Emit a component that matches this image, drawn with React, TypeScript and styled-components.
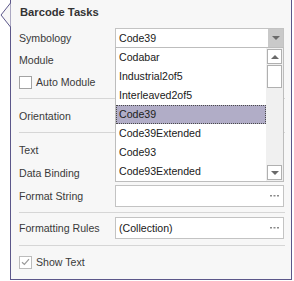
import React from "react";
import styled, { createGlobalStyle } from "styled-components";

const GlobalStyle = createGlobalStyle`
  body {
    margin: 0;
    background: #ffffff;
    font-family: "Liberation Sans", Arial, sans-serif;
  }
`;

const symbologies = [
  "Codabar",
  "Industrial2of5",
  "Interleaved2of5",
  "Code39",
  "Code39Extended",
  "Code93",
  "Code93Extended",
];

const Frame = styled.div`
  position: relative;
  width: 294px;
  height: 281px;
  padding-left: 10px;
  box-sizing: border-box;
`;

const Panel = styled.div`
  width: 282px;
  height: 280px;
  box-sizing: border-box;
  border: 1px solid #5c578a;
  border-top: none;
  background: #f7f7f7;
  padding: 0 6px 0 8px;
  display: flex;
  flex-direction: column;
  font-size: 10.6px;
  color: #3a3a3a;
`;

const Pointer = styled.svg`
  position: absolute;
  left: 0;
  top: 0;
`;

const Title = styled.div`
  height: 24px;
  line-height: 24px;
  margin-bottom: 4px;
  padding-left: 1px;
  font-weight: bold;
  font-size: 11.2px;
  color: #333333;
`;

const Row = styled.div<{ $h?: number; $mb?: number }>`
  height: ${(p) => p.$h ?? 22}px;
  margin-bottom: ${(p) => p.$mb ?? 0}px;
  display: flex;
  align-items: center;
  flex-shrink: 0;
`;

const Label = styled.div`
  width: 96px;
  flex-shrink: 0;
  white-space: nowrap;
`;

const Combo = styled.div`
  position: relative;
  width: 169px;
  height: 20px;
  box-sizing: border-box;
  border: 1px solid #c3c3c3;
  background: #ffffff;
  display: flex;
  align-items: center;
  color: #202020;
`;

const ComboText = styled.div`
  flex: 1;
  padding-left: 3px;
`;

const DropButton = styled.div`
  width: 15px;
  height: 100%;
  background: #c9c9c9;
  display: flex;
  align-items: center;
  justify-content: center;
`;

const Arrow = styled.div<{ $up?: boolean }>`
  width: 0;
  height: 0;
  border-left: 4px solid transparent;
  border-right: 4px solid transparent;
  ${(p) =>
    p.$up
      ? "border-bottom: 4px solid #6a6a6a;"
      : "border-top: 4px solid #6a6a6a;"}
`;

const DropList = styled.div`
  position: absolute;
  left: -1px;
  top: 18px;
  width: 169px;
  height: 135px;
  box-sizing: border-box;
  border: 1px solid #bdbdbd;
  background: #ffffff;
  display: flex;
  z-index: 2;
`;

const Items = styled.div`
  flex: 1;
  display: flex;
  flex-direction: column;
`;

const Item = styled.div<{ $selected?: boolean }>`
  height: 19px;
  line-height: 17px;
  box-sizing: border-box;
  padding-left: 2px;
  border: 1px ${(p) => (p.$selected ? "dotted #4a4a4a" : "solid transparent")};
  background: ${(p) => (p.$selected ? "#b1adc7" : "transparent")};
  color: #202020;
`;

const ScrollBar = styled.div`
  width: 17px;
  background: #f0f0f0;
  display: flex;
  flex-direction: column;
  align-items: center;
  padding: 1px 0;
  box-sizing: border-box;
`;

const ScrollButton = styled.div`
  width: 15px;
  height: 15px;
  box-sizing: border-box;
  border: 1px solid #b0b0b0;
  background: #ffffff;
  display: flex;
  align-items: center;
  justify-content: center;
`;

const Thumb = styled.div`
  width: 15px;
  height: 23px;
  margin-top: 1px;
  box-sizing: border-box;
  border: 1px solid #b0b0b0;
  background: #ffffff;
  flex-shrink: 0;
`;

const Track = styled.div`
  flex: 1;
`;

const Box = styled.div`
  width: 169px;
  height: 22px;
  box-sizing: border-box;
  border: 1px solid #c3c3c3;
  background: #ffffff;
  display: flex;
  align-items: center;
  color: #202020;
`;

const BoxText = styled.div`
  flex: 1;
  padding-left: 3px;
`;

const Dots = styled.svg`
  margin-right: 4px;
`;

const CheckBox = styled.div<{ $disabled?: boolean }>`
  width: 13px;
  height: 13px;
  box-sizing: border-box;
  border: 1px solid ${(p) => (p.$disabled ? "#bcbcbc" : "#a3a3a3")};
  background: #ffffff;
  margin-right: 4px;
  display: flex;
  align-items: center;
  justify-content: center;
`;

const Separator = styled.div<{ $mt: number; $mb: number }>`
  height: 1px;
  background: #d6d6d6;
  margin-top: ${(p) => p.$mt}px;
  margin-bottom: ${(p) => p.$mb}px;
  flex-shrink: 0;
`;

const Ellipsis = () => (
  <Dots width="9" height="2" viewBox="0 0 9 2">
    <rect x="0" y="0" width="2" height="1.5" fill="#8a8a8a" />
    <rect x="3.5" y="0" width="2" height="1.5" fill="#8a8a8a" />
    <rect x="7" y="0" width="2" height="1.5" fill="#8a8a8a" />
  </Dots>
);

const App: React.FC = () => {
  return (
    <>
      <GlobalStyle />
      <Frame>
        <Panel>
          <Title>Barcode Tasks</Title>
          <Row $h={20} $mb={1}>
            <Label>Symbology</Label>
            <Combo>
              <ComboText>Code39</ComboText>
              <DropButton>
                <Arrow />
              </DropButton>
              <DropList>
                <Items>
                  {symbologies.map((s) => (
                    <Item key={s} $selected={s === "Code39"}>
                      {s}
                    </Item>
                  ))}
                </Items>
                <ScrollBar>
                  <ScrollButton>
                    <Arrow $up />
                  </ScrollButton>
                  <Thumb />
                  <Track />
                  <ScrollButton>
                    <Arrow />
                  </ScrollButton>
                </ScrollBar>
              </DropList>
            </Combo>
          </Row>
          <Row>
            <Label>Module</Label>
          </Row>
          <Row>
            <CheckBox />
            <span>Auto Module</span>
          </Row>
          <Separator $mt={5} $mb={6} />
          <Row>
            <Label>Orientation</Label>
          </Row>
          <Separator $mt={5} $mb={6} />
          <Row>
            <Label>Text</Label>
          </Row>
          <Row $h={23}>
            <Label>Data Binding</Label>
          </Row>
          <Row $h={23}>
            <Label>Format String</Label>
            <Box>
              <BoxText />
              <Ellipsis />
            </Box>
          </Row>
          <Separator $mt={5} $mb={4} />
          <Row>
            <Label>Formatting Rules</Label>
            <Box>
              <BoxText>(Collection)</BoxText>
              <Ellipsis />
            </Box>
          </Row>
          <Separator $mt={6} $mb={5} />
          <Row>
            <CheckBox $disabled>
              <svg width="9" height="8" viewBox="0 0 9 8">
                <path
                  d="M1 4.2 L3.4 6.5 L8 1.2"
                  fill="none"
                  stroke="#9a9a9a"
                  strokeWidth="1.2"
                />
              </svg>
            </CheckBox>
            <span>Show Text</span>
          </Row>
        </Panel>
        <Pointer width="11" height="30" viewBox="0 0 11 30">
          <polygon points="10.5,3 1,15 10.5,27" fill="#f7f7f7" />
          <polyline
            points="10.5,0 10.5,3 1,15 10.5,27 10.5,30"
            fill="none"
            stroke="#5c578a"
            strokeWidth="1"
          />
        </Pointer>
      </Frame>
    </>
  );
};

export default App;
